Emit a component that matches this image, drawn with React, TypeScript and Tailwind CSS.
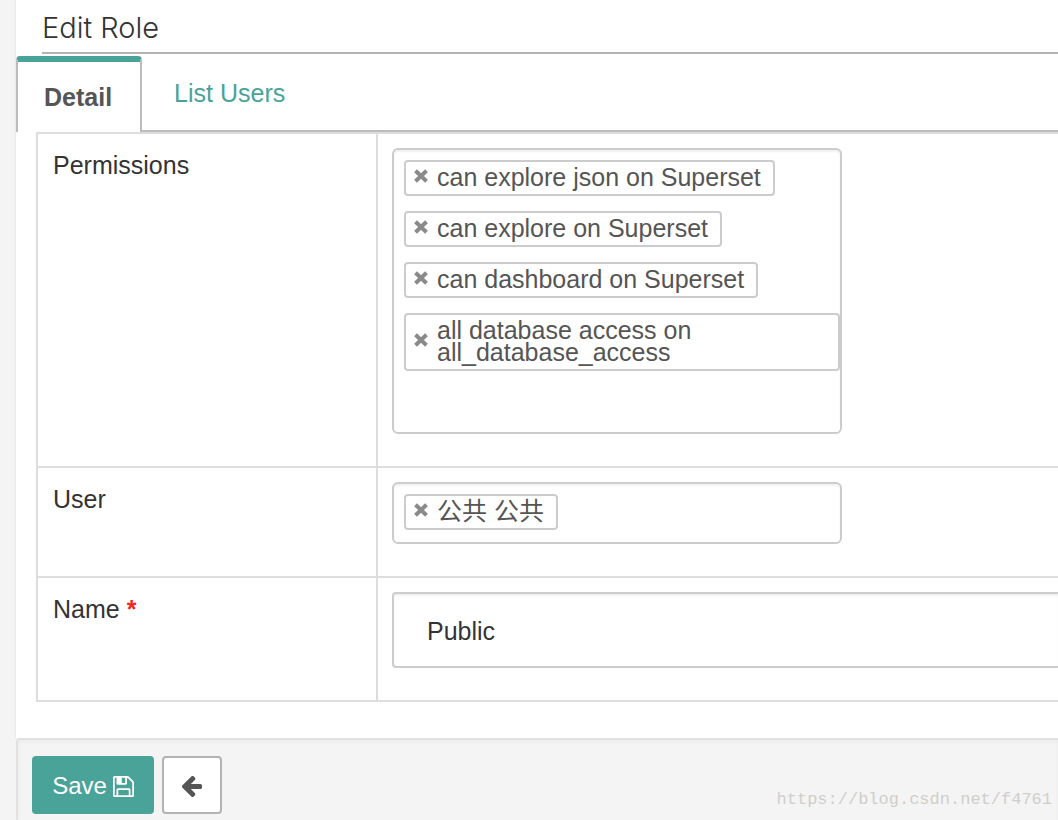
import { useState } from "react";

const boxCls =
  "flex w-[450px] max-w-full flex-wrap gap-x-2 gap-y-[15px] rounded-md border-2 border-[#ccc] bg-white pt-2.5 pb-3 pl-2.5 shadow-[inset_0_2px_2px_rgba(0,0,0,0.06)]";
const thCls = "w-[340px] border-r-2 border-b-2 border-[#ddd] px-[15px] pt-3.5 pb-8 text-left align-top font-normal leading-[34px]";
const tdCls = "border-b-2 border-[#ddd] pt-3.5 pb-8 pl-3.5 align-top";

function SaveIcon() {
  return (
    <svg viewBox="0 0 1536 1536" className="h-[21px] w-[21px]" fill="currentColor" aria-hidden="true">
      <path d="M384 1408h768v-384H384v384zm896 0h128V512q0-14-10-38.5t-20-34.5l-281-281q-10-10-34-20t-39-10v416q0 40-28 68t-68 28H352q-40 0-68-28t-28-68V128H128v1280h128V992q0-40 28-68t68-28h832q40 0 68 28t28 68v416zM896 480V160q0-13-9.5-22.5T864 128H672q-13 0-22.5 9.500T640 160v320q0 13 9.500 22.500T672 512h192q13 0 22.500-9.500T896 480zm640 32v928q0 40-28 68t-68 28H96q-40 0-68-28t-28-68V96q0-40 28-68T96 0h928q40 0 88 20t76 48l280 280q28 28 48 76t20 88z" />
    </svg>
  );
}

function BackIcon() {
  return (
    <svg viewBox="64 -64 1472 1536" className="h-[21px] w-5" fill="currentColor" aria-hidden="true">
      <path d="M1536 640v128q0 53-32.5 90.5T1419 896H715l293 294q38 36 38 90t-38 90l-75 76q-37 37-90 37-52 0-91-37L101 794q-37-37-37-90 0-52 37-91l651-650q38-38 91-38 52 0 90 38l75 74q38 38 38 91t-38 91L715 512h704q52 0 84.500 37.500T1536 640z" />
    </svg>
  );
}

function RemoveIcon() {
  return (
    <svg viewBox="0 0 14 14" className="h-3.5 w-3.5" stroke="#8a8a8a" strokeWidth="4" aria-hidden="true">
      <path d="M1.500 1.800 12.500 12.200M12.500 1.800 1.500 12.200" />
    </svg>
  );
}

function TagBox({ id, initial }: { id: string; initial: string[] }) {
  const [tags, setTags] = useState(initial);
  const [query, setQuery] = useState("");

  return (
    <div className={boxCls}>
      {tags.map(tag => (
        <span key={tag} className="flex items-center gap-[9px] rounded border-2 border-[#ccc] bg-white pt-1 pr-3 pb-1.5 pl-2 text-[25px] leading-[22px] text-[#555]">
          <button type="button" aria-label={`Remove ${tag}`} className="mb-0.5 shrink-0"
            onClick={() => setTags(list => list.filter(t => t !== tag))}>
            <RemoveIcon />
          </button>
          <span>{tag}</span>
        </span>
      ))}
      <input id={id} value={query} onChange={e => setQuery(e.target.value)}
        className="h-[34px] w-20 min-w-20 flex-1 bg-transparent outline-none" />
    </div>
  );
}

export default function App() {
  const [name, setName] = useState("Public");

  return (
    <div className="relative min-h-screen overflow-x-hidden bg-[#f4f4f4] pl-4 font-['Liberation_Sans','Noto_Sans_CJK_SC',sans-serif] text-[25px] text-[#333]">
      <main className="bg-white pb-9 shadow-[-1px_0_1px_rgba(0,0,0,0.04)]">
        <h1 className="ml-[26px] border-b-2 border-[#b3b3b3] pt-2.5 pb-1.5 font-['Inter','Liberation_Sans',sans-serif] text-[29px] leading-9 font-light text-[#333]">Edit Role</h1>

        <nav className="mt-0.5 flex">
          <a href="#detail" className="rounded-t border-x-2 border-t-[6px] border-x-[#bbb] border-t-[#4aa399] pt-[17px] pr-7 pb-[17px] pl-[26px] font-bold leading-9 text-[#555]">
            Detail
          </a>
          <div className="flex-1 border-b-2 border-[#bbb] pt-5 pl-8 leading-[34px]">
            <a href="#users" className="text-[#4aa399]">List Users</a>
          </div>
        </nav>

        <form id="role" className="ml-5" onSubmit={e => e.preventDefault()}>
          <table className="w-full table-fixed border-separate border-spacing-0 border-t-2 border-l-2 border-[#ddd]">
            <tbody>
              <tr>
                <th scope="row" className={thCls}><label htmlFor="permissions">Permissions</label></th>
                <td className={tdCls}>
                  <TagBox id="permissions" initial={[
                    "can explore json on Superset",
                    "can explore on Superset",
                    "can dashboard on Superset",
                    "all database access on all_database_access",
                  ]} />
                </td>
              </tr>
              <tr>
                <th scope="row" className={thCls}><label htmlFor="user">User</label></th>
                <td className={tdCls}><TagBox id="user" initial={["公共 公共"]} /></td>
              </tr>
              <tr>
                <th scope="row" className={thCls}>
                  <label htmlFor="name">Name <strong className="text-[#f0281e]">*</strong></label>
                </th>
                <td className={tdCls}>
                  <input id="name" value={name} onChange={e => setName(e.target.value)} required
                    className="block h-[76px] w-full rounded-l border-2 border-r-0 border-[#ccc] bg-white pt-0.5 pl-[33px] shadow-[inset_0_2px_2px_rgba(0,0,0,0.06)] outline-none" />
                </td>
              </tr>
            </tbody>
          </table>
        </form>
      </main>

      <footer className="flex gap-2 rounded-tl border-t-2 border-l-2 border-[#e1e1e1] px-3.5 pt-4 pb-1.5 shadow-[inset_0_2px_4px_rgba(0,0,0,0.04)]">
        <button type="submit" form="role" className="flex h-[58px] w-[122px] items-center justify-center gap-1.5 rounded bg-[#4aa399] pt-0.5 text-[24px] text-white">
          Save <SaveIcon />
        </button>
        <button type="button" aria-label="Back" className="flex h-[58px] w-[60px] items-center justify-center rounded border-2 border-[#b3b3b3] bg-white pt-0.5 text-[#555]">
          <BackIcon />
        </button>
      </footer>

      <span className="absolute right-1.5 bottom-2 font-['Liberation_Mono',monospace] text-[17px] leading-6 text-[#cfcfca]">
        https://blog.csdn.net/f4761
      </span>
    </div>
  );
}
